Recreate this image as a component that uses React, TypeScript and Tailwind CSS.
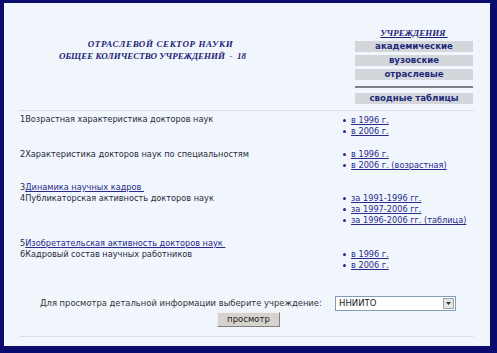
import React from "react";

const serif = { fontFamily: '"Liberation Serif", "Times New Roman", serif' };
const sans = { fontFamily: '"DejaVu Sans", Verdana, sans-serif' };

function Links({ items }: { items: string[] }) {
  return (
    <ul className="flex flex-col">
      {items.map((t) => (
        <li key={t} className="flex items-center h-[11px] leading-[11px]">
          <span className="w-[3px] h-[3px] rounded-full bg-[#2a2a80] ml-[1px] mr-[5px]" />
          <a className="text-[#2b2b8c] underline decoration-[#2b2b8c]" href="#">
            {t}
          </a>
        </li>
      ))}
    </ul>
  );
}

function MenuBtn({ children }: { children: React.ReactNode }) {
  return (
    <div className="h-[11px] bg-[#d3d7dc] flex items-center justify-center text-[8.6px] font-bold text-[#1e2a78] leading-none">
      {children}
    </div>
  );
}

export default function App() {
  return (
    <div className="w-[497px] h-[353px] bg-[#0b0b6e] pl-[4px] pt-[3px] pr-[7px] pb-[7px]">
      <div className="w-full h-full bg-[#f0f6fc] relative text-[8.2px] text-[#2a2a40]" style={sans}>
        {/* header */}
        <div className="flex h-[107px]">
          <div className="w-[297px] flex flex-col items-center pt-[35px]" style={serif}>
            <div className="ml-[16px] text-[9px] font-bold italic text-[#1f1f78] tracking-[0.6px] leading-[12px]">
              ОТРАСЛЕВОЙ СЕКТОР НАУКИ
            </div>
            <div className="text-[9px] font-bold italic text-[#1f1f78] leading-[12px]">
              ОБЩЕЕ КОЛИЧЕСТВО УЧРЕЖДЕНИЙ &nbsp;- &nbsp;18
            </div>
          </div>
          <div className="ml-[54px] w-[118px] flex flex-col pt-[24px]">
            <div className="text-center h-[14px] leading-[12px]">
              <a
                href="#"
                className="text-[9px] font-bold italic text-[#1f1f78] underline"
                style={serif}
              >
                УЧРЕЖДЕНИЯ&nbsp;
              </a>
            </div>
            <div className="flex flex-col gap-[3px]">
              <MenuBtn>академические</MenuBtn>
              <MenuBtn>вузовские</MenuBtn>
              <MenuBtn>отраслевые</MenuBtn>
            </div>
            <div className="h-[2px] bg-[#7f8084] mt-[6px] mb-[5px]" />
            <MenuBtn>сводные таблицы</MenuBtn>
          </div>
        </div>
        {/* dotted rule */}
        <div className="mx-[16px] border-t border-dotted border-[#c8ccd4]" />

        {/* rows */}
        <div className="pl-[16px] flex flex-col">
          <div className="flex mt-[3px] h-[35px]">
            <div className="w-[322px] leading-[11px]">1Возрастная характеристика докторов наук</div>
            <div className="pt-[1px]">
              <Links items={["в 1996 г.", "в 2006 г."]} />
            </div>
          </div>
          <div className="flex h-[33px]">
            <div className="w-[322px] leading-[11px]">2Характеристика докторов наук по специальностям</div>
            <Links items={["в 1996 г.", "в 2006 г. (возрастная)"]} />
          </div>
          <div className="flex h-[56px]">
            <div className="w-[322px] leading-[11px]">
              <div>
                3<a href="#" className="text-[#2b2b8c] underline">Динамика научных кадров&nbsp;</a>
              </div>
              <div>4Публикаторская активность докторов наук</div>
            </div>
            <div className="pt-[11px]">
              <Links items={["за 1991-1996 гг.", "за 1997-2006 гг.", "за 1996-2006 гг. (таблица)"]} />
            </div>
          </div>
          <div className="flex h-[40px]">
            <div className="w-[322px] leading-[11px]">
              <div>
                5<a href="#" className="text-[#2b2b8c] underline">Изобретательская активность докторов наук&nbsp;</a>
              </div>
              <div>6Кадровый состав научных работников</div>
            </div>
            <div className="pt-[11px]">
              <Links items={["в 1996 г.", "в 2006 г."]} />
            </div>
          </div>
        </div>

        {/* bottom form */}
        <div className="flex items-center mt-[17px] h-[16px]">
          <div className="ml-[36px] w-[295px] text-[8.4px] text-[#333] whitespace-nowrap">
            Для просмотра детальной информации выберите учреждение:
          </div>
          <div className="w-[121px] h-[15px] bg-white border border-[#7f9db9] flex items-center justify-between">
            <span className="pl-[3px] text-[8.5px] text-[#222]">ННИИТО</span>
            <span className="w-[11px] h-[11px] mr-[1px] bg-[#e4e4e4] border border-[#a0a0a0] flex items-center justify-center">
              <svg width="5" height="3" viewBox="0 0 5 3">
                <path d="M0 0h5L2.5 3z" fill="#333" />
              </svg>
            </span>
          </div>
        </div>
        <div className="flex mt-[1px]">
          <div className="ml-[213px] w-[63px] h-[15px] bg-[#d6d3ce] border border-[#efefef] border-r-[#808080] border-b-[#808080] flex items-center justify-center text-[8.5px] text-[#222]">
            просмотр
          </div>
        </div>
        <div className="mx-[16px] mt-[9px] border-t border-dotted border-[#c8ccd4]" />
      </div>
    </div>
  );
}
